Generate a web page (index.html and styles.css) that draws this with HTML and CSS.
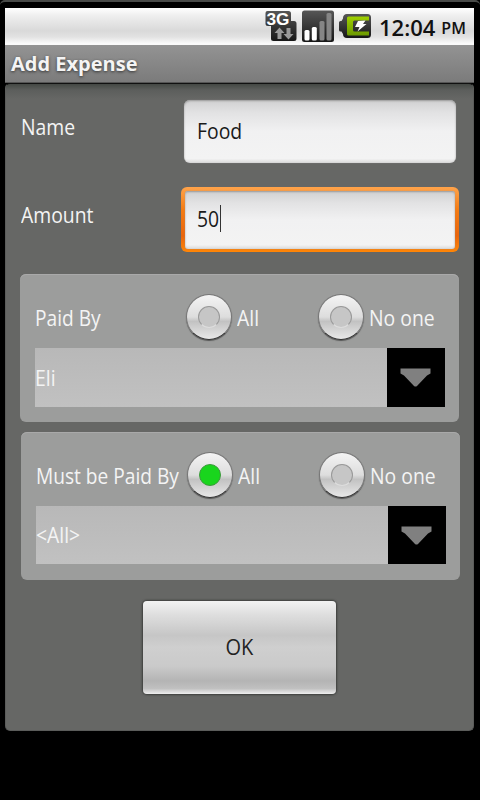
FILE: index.html
```html
<!DOCTYPE html>
<html lang="en">
<head>
<meta charset="utf-8">
<title>Add Expense</title>
<link rel="stylesheet" href="styles.css">
</head>
<body>
<div class="phone">
  <header class="status">
    <svg class="status-icons" width="108" height="34" viewBox="0 0 108 34">
      <defs>
        <linearGradient id="dark" x1="0" y1="0" x2="0" y2="1"><stop offset="0" stop-color="#565656"/><stop offset="1" stop-color="#161616"/></linearGradient>
        <linearGradient id="lime" x1="0" y1="0" x2="0" y2="1"><stop offset="0" stop-color="#9fd000"/><stop offset="1" stop-color="#6c9900"/></linearGradient>
      </defs>
      <path d="M2.500 1h21a2.500 2.500 0 0 1 2.500 2.500V11h3a2.500 2.500 0 0 1 2.500 2.500v15a2.500 2.500 0 0 1-2.500 2.500H8.500A2.500 2.500 0 0 1 6 28.500V16H3a2.500 2.500 0 0 1-2.500-2.500V3A2 2 0 0 1 2.500 1z" fill="url(#dark)"/>
      <text x="1.500" y="14.500" class="net" textLength="23" lengthAdjust="spacingAndGlyphs">3G</text>
      <path d="M14.500 17.500l5 5.500h-3v6h-4v-6h-3z" fill="#999"/>
      <path d="M23.500 29.500l-5-5.500h3v-6h4v6h3z" fill="#999"/>
      <rect x="37" y="0.500" width="32" height="31.500" rx="2.500" fill="url(#dark)"/>
      <rect x="39.500" y="20" width="5" height="10.500" rx="1.500" fill="#fff"/>
      <rect x="46.800" y="17" width="5" height="13.500" rx="1.500" fill="#fff"/>
      <rect x="54.500" y="11" width="5" height="19.500" rx="1.500" fill="#858585"/>
      <rect x="61.500" y="3" width="5" height="27.500" rx="1.500" fill="#858585"/>
      <path d="M82 4h20.500a3.500 3.500 0 0 1 3.500 3.500v17a3.500 3.500 0 0 1-3.500 3.500H82a4 4 0 0 1-4-4l-1.500-2.500H75.500a1.500 1.500 0 0 1-1.500-1.500v-7.500a1.500 1.500 0 0 1 1.500-1.500H76.500L78 8.500A4 4 0 0 1 82 4z" fill="url(#dark)"/>
      <path d="M83.500 6.500H104v4H89.500q-1.500 0-1.500 1.500v8q0 1.500 1.500 1.500H104v4H83.500q-1.500 0-1.500-1.500V8q0-1.500 1.500-1.500z" fill="url(#lime)"/>
      <path d="M93 11l7.500-0.500-2.500 3.500h3.500l-9 7.500 2-4.500h-4.500z" fill="#fff"/>
    </svg>
    <span class="clock">12:04</span><span class="meridiem">PM</span>
  </header>
  <div class="titlebar"><span>Add Expense</span></div>
  <main class="content">
    <div class="row">
      <label class="t" for="name">Name</label>
      <div class="field" id="name"><span class="t">Food</span></div>
    </div>
    <div class="row row-amount">
      <label class="t" for="amount">Amount</label>
      <div class="focus"><div class="field" id="amount"><span class="t">50</span><i class="caret"></i></div></div>
    </div>
    <section class="group">
      <div class="options">
        <span class="legend"><span class="t">Paid By</span></span>
        <span class="radio"></span><span class="option"><span class="t">All</span></span>
        <span class="radio"></span><span class="t">No one</span>
      </div>
      <div class="select">
        <span class="t">Eli</span>
        <span class="arrow"><svg width="31" height="19" viewBox="0 0 31 19"><path d="M0.500 0.500h30v5L27 7.500 17 18q-1.500 1.200-3 0L4 7.500 0.500 5.500z" fill="#808080"/></svg></span>
      </div>
    </section>
    <section class="group group-due">
      <div class="options">
        <span class="legend"><span class="t">Must be Paid By</span></span>
        <span class="radio checked"></span><span class="option"><span class="t">All</span></span>
        <span class="radio"></span><span class="t">No one</span>
      </div>
      <div class="select">
        <span class="t">&lt;All&gt;</span>
        <span class="arrow"><svg width="31" height="19" viewBox="0 0 31 19"><path d="M0.500 0.500h30v5L27 7.500 17 18q-1.500 1.200-3 0L4 7.500 0.500 5.500z" fill="#808080"/></svg></span>
      </div>
    </section>
    <button class="ok"><span>OK</span></button>
  </main>
</div>
</body>
</html>
```
FILE: styles.css
```css
* { box-sizing: border-box; }
body { margin: 0; background: #000; }
.phone {
  width: 480px;
  height: 800px;
  padding: 6px 6px 0 5px;
  border-top: 2px solid #494b49;
  border-radius: 5px 5px 0 0;
  background: #000;
  font-family: "Open Sans", "Noto Sans", sans-serif;
  font-size: 22px;
  line-height: 30px;
  color: #f4f4f4;
}
.status {
  height: 37px;
  display: flex;
  align-items: flex-start;
  padding: 2px 9px 0 260px;
  background: linear-gradient(#fff 0, #efefef 20%, #d9d9d9 62%, #e2e2e2 78%, #fafafa 96%);
  color: #111;
}
.status-icons { flex: none; }
.net { font: 700 17px "Liberation Sans", sans-serif; fill: #fff; }
.clock { width: 63px; padding-left: 6px; font-weight: 600; font-size: 22px; line-height: 34px; white-space: nowrap; }
.meridiem { padding-left: 6px; font-weight: 600; font-size: 16px; line-height: 37px; }
.titlebar {
  height: 38px;
  padding: 4px 6px;
  background: linear-gradient(#939393, #7b7b7b);
  border-bottom: 1px solid #555;
  font-weight: 700;
  font-size: 20px;
  text-shadow: 0 1px 3px #333;
}
.content {
  height: 648px;
  padding: 16px 15px 0;
  border-radius: 5px;
  background: linear-gradient(#444844 0, #5c5e5c 6px, #666765 15px);
  border: 1px solid #5b5c5a;
  border-top-color: #111;
  display: flex;
  flex-direction: column;
}
.t { display: inline-block; white-space: nowrap; transform: scaleX(.88); transform-origin: left; }
.row { display: flex; justify-content: space-between; height: 64px; align-items: flex-start; padding-right: 2px; }
.row label { padding-top: 11px; margin-left: -0.500px; }
.field {
  width: 272px;
  height: 63px;
  padding: 15px 13px;
  border-radius: 6px;
  background: linear-gradient(#d0d0d1 0, #e2e2e3 20%, #f1f1f2 50%, #f3f3f3 93%, #d9d9d9);
  box-shadow: inset 0 1px 2px #999, 0 0 1px #999;
  color: #1a1a1a;
  display: flex;
}
.row-amount { margin-top: 23px; height: 65px; padding: 0; }
.row-amount label { padding-top: 12px; }
.focus {
  width: 278px;
  height: 65px;
  padding: 4px 4px 3px;
  margin-right: -1px;
  border-radius: 6px;
  background: linear-gradient(#ffa34a, #f47b13 35%, #e9650c 75%, #ff8607);
}
.focus .field { width: 270px; height: 58px; padding: 12px; border-radius: 3px; }
.caret { width: 1px; height: 27px; margin: 2px 0 0 -2px; background: #333; }
.group {
  width: 439px;
  height: 148px;
  margin-top: 22px;
  margin-left: -1px;
  padding: 15px 15px;
  border-radius: 6px;
  background: #9c9d9c;
  box-shadow: inset 0 1px #a9a9a9;
}
.group-due { margin-left: 0; margin-top: 10px; }
.options { height: 59px; display: flex; align-items: center; }
.options > span { margin-top: -3px; }
.legend { width: 151px; white-space: nowrap; }
.legend .t { transform: scaleX(.87); }
.option { width: 81px; }
.radio {
  flex: none;
  width: 46px;
  height: 46px;
  margin-right: 5px;
  border-radius: 50%;
  background: linear-gradient(#f4f4f4, #ddd 50%, #c2c2c2 60%, #e8e8e8);
  border: 1px solid #777;
  border-bottom-color: #333;
  box-shadow: 0 1px 1px #555;
  display: flex;
  align-items: center;
  justify-content: center;
}
.radio::before {
  content: "";
  width: 20px;
  height: 20px;
  border-radius: 50%;
  background: #c6c6c6;
  border: 1px solid #999;
  border-bottom-color: #ddd;
}
.radio.checked::before { background: #19d51d; border-color: #3c9a3c; }
.group-due .options > span { margin-top: -4px; }
.select {
  width: 410px;
  height: 59px;
  display: flex;
  align-items: center;
  justify-content: space-between;
  background: linear-gradient(#b8b8b8, #c1c1c1);
}
.group-due .select, .group-due .arrow { height: 58px; }
.select .t { margin-top: -2px; margin-left: -0.500px; }
.arrow { width: 58px; height: 59px; padding-right: 1px; background: #000; display: flex; align-items: center; justify-content: center; }
.ok {
  width: 193px;
  height: 93px;
  margin: 21px 0 0 122px;
  padding: 0 0 4px;
  border: 0;
  border-radius: 4px;
  background: linear-gradient(#f3f3f3 0, #dedede 15%, #c6c6c6 37%, #cfcfcf 50%, #cacaca 70%, #b4b4b4 86%, #c0c0c0 94%, #eee);
  box-shadow: 0 0 2px 1px #3c3e3c;
  font: inherit;
  color: #222;
}
.ok span { display: inline-block; transform: scaleX(.91); }
```
